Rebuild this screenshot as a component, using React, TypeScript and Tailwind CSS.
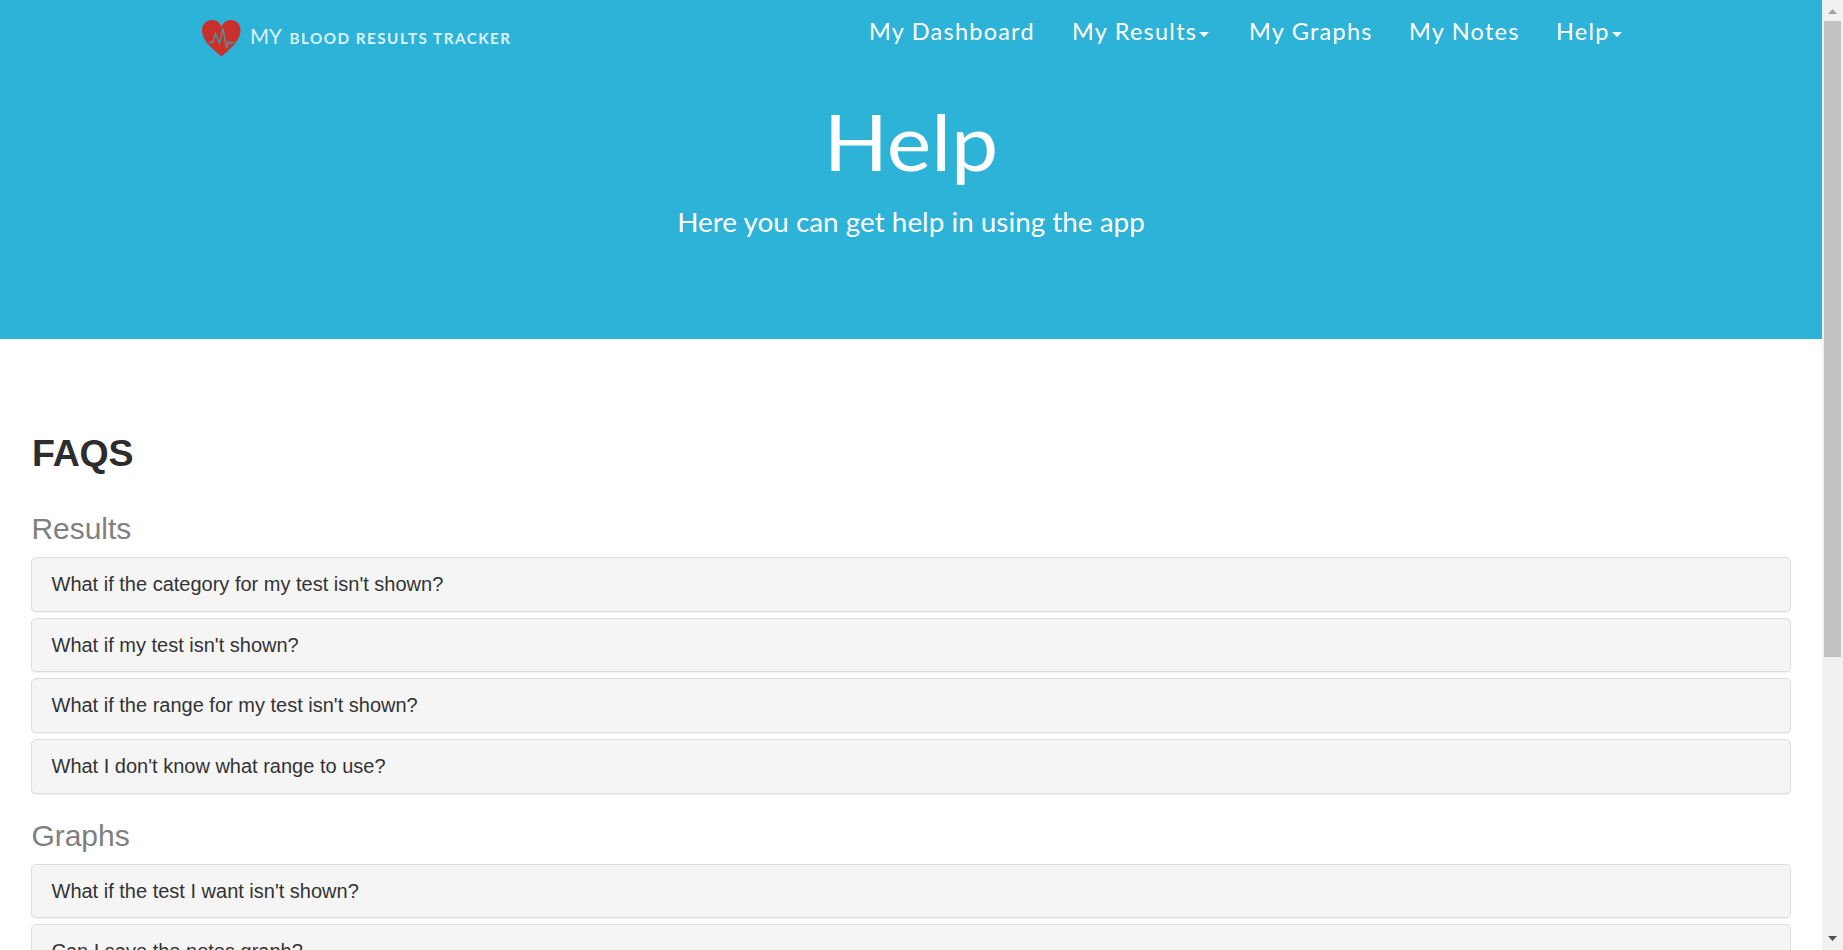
import React from 'react';

const results = [
  "What if the category for my test isn't shown?",
  "What if my test isn't shown?",
  "What if the range for my test isn't shown?",
  "What I don't know what range to use?",
];
const graphs = ["What if the test I want isn't shown?", 'Can I save the notes graph?'];

function Caret() {
  return (
    <svg className="ml-[2px] mt-[5px] inline-block h-[5px] w-[10px] shrink-0" viewBox="0 0 10 5" fill="white">
      <path d="M0 0H10L5 5Z" />
    </svg>
  );
}

function NavItem({ label, className, caret }: { label: string; className: string; caret?: boolean }) {
  return (
    <a href="#" className={`flex shrink-0 items-center whitespace-nowrap ${className}`}>
      <span>{label}</span>
      {caret && <Caret />}
    </a>
  );
}

function Logo() {
  return (
    <div className="flex w-[668px] shrink-0 pt-[19px]">
      <svg className="h-[39px] w-[40px] shrink-0" viewBox="0 0 40 39">
        <path
          d="M20.5 37.5C15 32.5 1 23 1 11.5C1 5.5 5.5 1 11 1C15.5 1 19 3.5 20.5 8C22 3.5 25.5 1 30 1C35.5 1 39.5 5.5 39.5 11.5C39.5 23 26 32.5 20.5 37.5Z"
          fill="#c9302c"
        />
        <path
          d="M8 23.5H12L14.5 14.5L18.5 24.5L22 9.5L25.5 29L27.5 22.5L29 25L30.5 23.5H33.5"
          fill="none"
          stroke="#4f959c"
          strokeWidth="1.4"
        />
      </svg>
      <div className="flex h-[39px] items-baseline whitespace-nowrap pl-[9px] pt-[2px] text-[#dcf3fa]">
        <span className="w-[39.5px] text-[20.5px] leading-[30px]">MY</span>
        <span className="text-[15.2px] font-bold tracking-[1.5px]">BLOOD RESULTS TRACKER</span>
      </div>
    </div>
  );
}

function Section({ title, items, className }: { title: string; items: string[]; className: string }) {
  return (
    <section className={className}>
      <h2 className="pl-[0.5px] text-[30px] leading-[33px] tracking-[-0.05px] text-[#808080]">{title}</h2>
      <div className="mt-[12px] flex flex-col gap-[6.1px]">
        {items.map((q) => (
          <div
            key={q}
            className="h-[54.6px] shrink-0 rounded-[5px] border border-[#dddddd] bg-[#f5f5f5] pl-[19.5px] pt-[15px] text-[20px] leading-[22px] text-[#333333] shadow-[0_1px_1px_rgba(0,0,0,0.05)]"
          >
            {q}
          </div>
        ))}
      </div>
    </section>
  );
}

export default function App() {
  return (
    <div className="flex h-[950px] w-[1843px] overflow-hidden bg-white font-['Liberation_Sans',Arial,sans-serif]">
      <div className="w-[1822px] shrink-0">
        <header className="h-[339px] bg-[#2db2d8] font-['Lato',sans-serif] text-white">
          <div className="flex h-[66px] pl-[201px]">
            <Logo />
            <nav className="flex h-[64px] text-[23.5px] tracking-[1.23px]">
              <NavItem label="My Dashboard" className="w-[203px]" />
              <NavItem label="My Results" className="w-[177px]" caret />
              <NavItem label="My Graphs" className="w-[160px]" />
              <NavItem label="My Notes" className="w-[147px]" />
              <NavItem label="Help" className="w-[90px]" caret />
            </nav>
          </div>
          <h1 className="mt-[28px] scale-x-[1.08] text-center text-[78px] leading-[94px]">Help</h1>
          <p className="mt-[16px] scale-x-[1.052] text-center text-[26.5px] leading-[36px]">
            Here you can get help in using the app
          </p>
        </header>
        <main className="px-[31px] pt-[92px]">
          <h1 className="pl-px text-[37.5px] font-bold leading-[44px] tracking-[-0.2px] text-[#2d2d2d]">FAQS</h1>
          <Section title="Results" items={results} className="pt-[37px]" />
          <Section title="Graphs" items={graphs} className="pt-[25px]" />
        </main>
      </div>
      <aside className="flex w-[21px] shrink-0 flex-col items-center bg-[#f1f1f1]">
        <svg className="h-[21px] w-[17px] shrink-0" viewBox="0 0 17 21" fill="#a3a3a3">
          <path d="M4 14L8.5 9L13 14Z" />
        </svg>
        <div className="h-[636px] w-[17px] bg-[#c1c1c1]" />
        <svg className="mt-auto h-[21px] w-[17px] shrink-0" viewBox="0 0 17 21" fill="#505050">
          <path d="M4 7H13L8.5 12Z" />
        </svg>
      </aside>
    </div>
  );
}
